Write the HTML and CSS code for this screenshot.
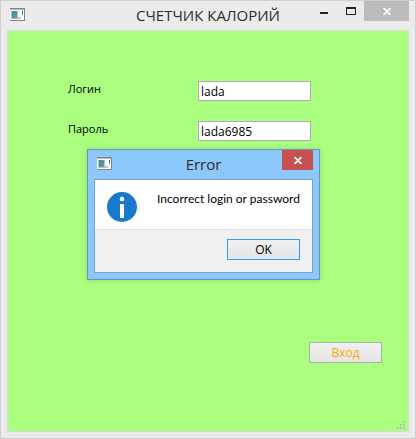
FILE: index.html
```
<!DOCTYPE html>
<html lang="ru">
<head>
<meta charset="utf-8">
<title>СЧЕТЧИК КАЛОРИЙ</title>
<link rel="stylesheet" href="styles.css">
</head>
<body>
<svg width="0" height="0" class="defs" aria-hidden="true">
  <defs>
    <linearGradient id="pane" x1="0" y1="0" x2="1" y2="1">
      <stop offset="0" stop-color="#4a7fb0"/>
      <stop offset="1" stop-color="#5aa87c"/>
    </linearGradient>
    <symbol id="app" viewBox="0 0 15 13">
      <path fill="#fafafa" d="M0 0h15v13H0z"/>
      <path fill="#82868a" d="M0 0h15v1H0zM14 0h1v13h-1zM0 12h15v1H0z"/>
      <path fill="#b4b8bb" d="M0 1h14v1H0z"/>
      <path fill="#a9c3cf" d="M1 3h7v8H1z"/>
      <path fill="url(#pane)" d="M2 3h5v7H2z"/>
      <path fill="#c8c8c8" d="M8 9h3v2H8z"/>
      <path fill="#2d62b5" d="M12 3h1v2h-1z"/>
      <path fill="#3b8c5a" d="M12 5h1v2h-1z"/>
    </symbol>
    <symbol id="cross" viewBox="0 0 8 7">
      <path fill="none" stroke="#fff" stroke-width="1.7" d="M.6.1l6.8 6.8M7.4.1L.6 6.9"/>
    </symbol>
  </defs>
</svg>
<div class="window">
  <header class="titlebar">
    <svg class="app-icon"><use href="#app"/></svg>
    <h1 class="title">СЧЕТЧИК КАЛОРИЙ</h1>
    <div class="controls">
      <button class="control" type="button" aria-label="Свернуть"><svg width="8" height="8"><path fill="#222" d="M0 5h8v2H0z"/></svg></button>
      <button class="control" type="button" aria-label="Развернуть"><svg width="10" height="8"><path fill="#222" fill-rule="evenodd" d="M0 0h10v8H0zM1 2v5h8V2z"/></svg></button>
      <button class="control close" type="button" aria-label="Закрыть"><svg width="8" height="7"><use href="#cross"/></svg></button>
    </div>
  </header>
  <main class="client">
    <form class="form">
      <label for="login">Логин</label>
      <input class="field" id="login" type="text" value="lada">
      <label for="password">Пароль</label>
      <input class="field" id="password" type="text" value="lada6985">
      <button class="button submit" type="button">Вход</button>
    </form>
    <svg class="grip" width="8" height="8"><path fill="#bfbfbf" d="M6 0h2v2H6zM3 3h2v2H3zM6 3h2v2H6zM0 6h2v2H0zM3 6h2v2H3zM6 6h2v2H6z"/></svg>
    <section class="dialog" role="dialog" aria-labelledby="dialog-title">
      <header class="titlebar">
        <svg class="app-icon"><use href="#app"/></svg>
        <h2 class="title" id="dialog-title">Error</h2>
        <div class="controls">
          <button class="control close" type="button" aria-label="Закрыть"><svg width="8" height="7"><use href="#cross"/></svg></button>
        </div>
      </header>
      <div class="panel">
        <div class="message">
          <svg class="info" width="30" height="30" viewBox="0 0 30 30"><circle cx="15" cy="15" r="15" fill="#1979ca"/><circle cx="15" cy="7" r="2.3" fill="#fff"/><path fill="#fff" d="M13 12h4v14h-4z"/></svg>
          <p>Incorrect login or password</p>
        </div>
        <footer class="actions"><button class="button ok" type="button">OK</button></footer>
      </div>
    </section>
  </main>
</div>
</body>
</html>
```
FILE: styles.css
```
* {
  box-sizing: border-box;
}

body {
  margin: 0;
  color: #000;
  font: 12px/16px "Open Sans", "Noto Sans", sans-serif;
}

button,
input {
  margin: 0;
  padding: 0;
  font: inherit;
  border: 0;
  border-radius: 0;
  outline: 0;
}

svg {
  display: block;
}

.defs {
  position: absolute;
}

.window {
  display: flex;
  flex-direction: column;
  min-height: 100vh;
  padding: 0 6px 6px;
  background: #ebebeb;
  border: 1px solid #cfcfcf;
}

.titlebar {
  position: relative;
  display: flex;
  justify-content: space-between;
  height: 29px;
}

.app-icon {
  width: 15px;
  height: 13px;
  margin: 7px 3px;
}

.title {
  position: absolute;
  inset: 0;
  margin: 0;
  color: #2b2b2b;
  font-size: 15px;
  font-weight: 400;
  line-height: 29px;
  text-align: center;
  pointer-events: none;
}

.controls {
  display: flex;
  height: 20px;
}

.control {
  display: grid;
  place-items: center;
  width: 27px;
  background: none;
}

.close {
  width: 45px;
  background: #bcbcbc;
}

.client {
  position: relative;
  flex: 1;
  background: #aaff7f;
  border: 1px solid #d9d9d9;
}

.form {
  display: grid;
  grid-template-columns: 130px 113px;
  row-gap: 20px;
  padding: 50px 26px 0 60px;
}

.form label {
  font-size: 11px;
  font-weight: 500;
}

.field {
  height: 20px;
  padding: 0 2px;
  background: #fff;
  border: 1px solid #abadb3;
}

.button {
  width: 73px;
  height: 21px;
  background: linear-gradient(#f0f0f0, #e5e5e5);
  border: 1px solid #acacac;
}

.submit {
  grid-column: 1 / -1;
  margin: 181px 0 0 241px;
  color: #ffaa00;
}

.grip {
  position: absolute;
  right: 3px;
  bottom: 2px;
}

.dialog {
  position: absolute;
  top: 118px;
  left: 79px;
  width: 233px;
  padding: 0 6px 6px;
  background: #8dc8fb;
  border: 1px solid #6496c0;
  box-shadow: 0 0 6px rgba(0, 0, 0, 0.15);
}

.dialog .close {
  width: 31px;
  background: #c75050;
}

.panel {
  background: #f0f0f0;
  border: 1px solid #72a3cf;
}

.message {
  display: flex;
  gap: 20px;
  height: 50px;
  padding: 12px 10px 0 12px;
  background: #fff;
  border-bottom: 1px solid #dfdfdf;
}

.info {
  flex: none;
}

.message p {
  margin: 0;
  font-family: Lato, "Open Sans", sans-serif;
  line-height: 14px;
  white-space: nowrap;
}

.actions {
  display: flex;
  justify-content: flex-end;
  padding: 9px 12px 12px;
}

.ok {
  border-color: #3399ff;
}
```
